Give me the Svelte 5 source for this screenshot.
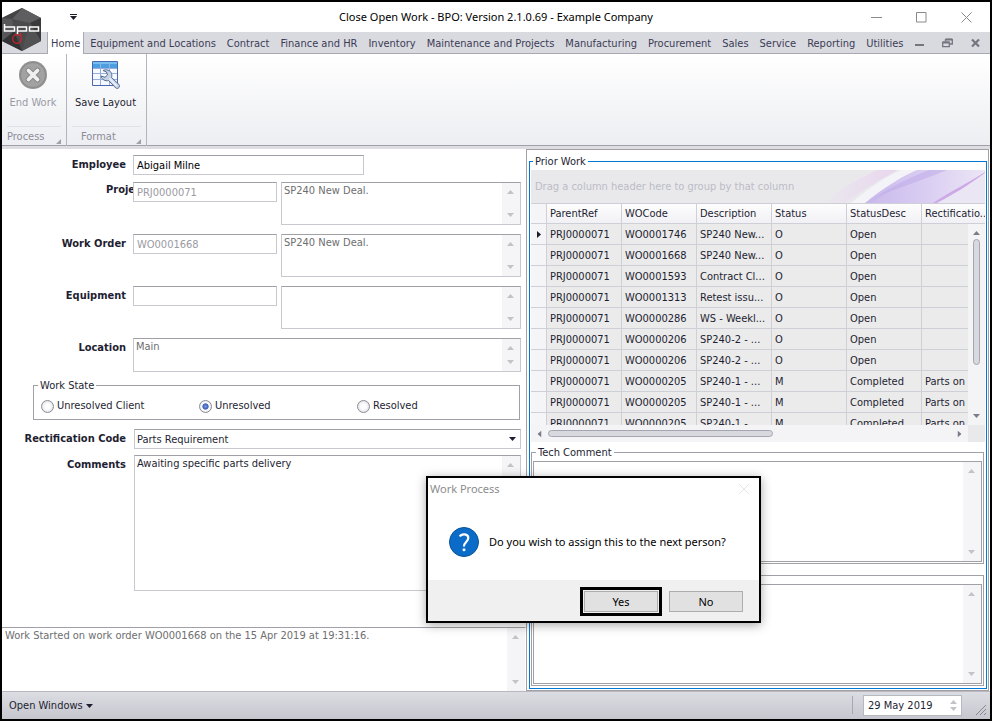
<script>
let state = "unresolved";
let code = "Parts Requirement";

const tabs = [
    "Equipment and Locations",
    "Contract",
    "Finance and HR",
    "Inventory",
    "Maintenance and Projects",
    "Manufacturing",
    "Procurement",
    "Sales",
    "Service",
    "Reporting",
    "Utilities",
];

const links = [
    { id : "project", label : "Project", ref : "PRJ0000071", text : "SP240 New Deal." },
    { id : "order", label : "Work Order", ref : "WO0001668", text : "SP240 New Deal." },
    { id : "equipment", label : "Equipment", ref : "", text : "" },
];

const states = [
    { value : "client", label : "Unresolved Client" },
    { value : "unresolved", label : "Unresolved" },
    { value : "resolved", label : "Resolved" },
];

const columns = [ "ParentRef", "WOCode", "Description", "Status", "StatusDesc", "Rectificatio.." ];

const rows = [
    [ "PRJ0000071", "WO0001746", "SP240 New...", "O", "Open", "" ],
    [ "PRJ0000071", "WO0001668", "SP240 New...", "O", "Open", "" ],
    [ "PRJ0000071", "WO0001593", "Contract Cl...", "O", "Open", "" ],
    [ "PRJ0000071", "WO0001313", "Retest issu...", "O", "Open", "" ],
    [ "PRJ0000071", "WO0000286", "WS - Weekl...", "O", "Open", "" ],
    [ "PRJ0000071", "WO0000206", "SP240-2 - ...", "O", "Open", "" ],
    [ "PRJ0000071", "WO0000206", "SP240-2 - ...", "O", "Open", "" ],
    [ "PRJ0000071", "WO0000205", "SP240-1 - ...", "M", "Completed", "Parts on" ],
    [ "PRJ0000071", "WO0000205", "SP240-1 - ...", "M", "Completed", "Parts on" ],
    [ "PRJ0000071", "WO0000205", "SP240-1 - ...", "M", "Completed", "Parts on" ],
];
</script>

{#snippet arrow(dir)}
    <svg class="arrow {dir}" viewBox="0 0 7 4" width="7" height="4" aria-hidden="true"><path d="M0 4L3.5 0L7 4z" /></svg>
{/snippet}

{#snippet memo(id, text, label)}
    <div class="memo">
        <textarea {id} aria-label={label} readonly value={text}></textarea>
        <div class="strip">
            {@render arrow("up")}
            {@render arrow("down")}
        </div>
    </div>
{/snippet}

<div class="window">
    <header class="titlebar">
        <button class="quick" aria-label="Customise toolbar">
            <svg viewBox="0 0 7 6" width="7" height="6"><path d="M0 0h7v1H0zM0 2h7L3.500 6z" fill="#1e1e28" /></svg>
        </button>
        <h1>Close Open Work - BPO: Version 2.1.0.69 - Example Company</h1>
        <div class="controls">
            <button aria-label="Minimise"><svg viewBox="0 0 11 11" width="11" height="11"><path d="M0 5.5h11" /></svg></button>
            <button aria-label="Maximise"><svg viewBox="0 0 11 11" width="11" height="11"><path d="M.5 .5h9.500v9.500h-9.500z" /></svg></button>
            <button aria-label="Close"><svg viewBox="0 0 11 11" width="11" height="11"><path d="M.5 .5l10 10M10.500 .5l-10 10" /></svg></button>
        </div>
    </header>

    <svg class="logo" viewBox="0 0 40 46" width="40" height="46" aria-hidden="true">
        <path d="M20 1L39 11V34L20 44L0 34V11z" fill="#4a4a4c" />
        <path d="M20 1L39 11L28 16L10 12z" fill="#5e5e60" />
        <path d="M20 1L10 12L0 11z" fill="#444446" />
        <path d="M39 11V34L28 16z" fill="#3a3a3c" />
        <path d="M39 34L20 44L28 16z" fill="#525254" />
        <path d="M0 34L20 44L12 24z" fill="#333335" />
        <path d="M0 11L10 12L12 24L0 34z" fill="#58585a" />
        <g fill="none" stroke="#fff" stroke-width="1.500">
            <path d="M2.500 17V24H12.500V20H2.500" />
            <path d="M15.500 28V20H24.500V24H15.500" />
            <path d="M27.500 20H36.500V24H27.500z" />
        </g>
        <circle cx="15" cy="32" r="4.300" fill="none" stroke="#d3222a" stroke-width="1.200" />
        <path d="M18.500 29V26" stroke="#d3222a" />
    </svg>

    <nav class="tabs">
        <a class="active" href="#home">Home</a>
        {#each tabs as tab}
            <a href="#{tab.toLowerCase().split(' ').join('-')}">{tab}</a>
        {/each}
        <div class="mdi">
            <button aria-label="Minimise document"><svg viewBox="0 0 11 10" width="11" height="10"><path d="M1 6h9v2H1z" fill="#74757f" /></svg></button>
            <button aria-label="Restore document"><svg viewBox="0 0 11 10" width="11" height="10"><g fill="none" stroke="#74757f" stroke-width="1.300"><path d="M3.500 3.500V1.300H10.300V6H7.500" /><path d="M.7 4.200H7.300V8.600H.7z" /><path d="M4 1.600h6M1 4.500h6" stroke-width="2" /></g></svg></button>
            <button aria-label="Close document"><svg viewBox="0 0 11 10" width="11" height="10"><path d="M2 1.500l7 7M9 1.500l-7 7" stroke="#74757f" stroke-width="2.200" /></svg></button>
        </div>
    </nav>

    <div class="ribbon">
        <section class="group process">
            <button class="big" disabled>
                <svg viewBox="0 0 30 30" width="30" height="30">
                    <circle cx="15" cy="15" r="14" fill="#949494" />
                    <circle cx="15" cy="15" r="12.500" fill="#a2a2a2" stroke="#8a8a8a" />
                    <path d="M10.500 10.500l9 9M19.500 10.500l-9 9" stroke="#858585" stroke-width="5.500" stroke-linecap="round" />
                    <path d="M10.500 10.500l9 9M19.500 10.500l-9 9" stroke="#f0f0f0" stroke-width="3.800" stroke-linecap="round" />
                </svg>
                <span>End Work</span>
            </button>
            <footer>Process <svg class="launch" viewBox="0 0 5 5" width="5" height="5"><path d="M5 0V5H0z" /></svg></footer>
        </section>
        <section class="group format">
            <button class="big">
                <svg viewBox="0 0 30 30" width="30" height="30">
                    <path d="M1.500 1.500h25v24h-25z" fill="#f6f9ff" stroke="#4a66b0" />
                    <path d="M2 2h24v6H2z" fill="#4b9fe0" />
                    <path d="M2 2h24v2H2z" fill="#74bdf0" />
                    <path d="M9.500 2v23M18.500 2v23M2 8.500h24M2 13.500h24M2 19.500h24" stroke="#98aedb" />
                    <path d="M12 10.500C15 9 19.500 10 20.500 13.500C21 15 20.800 16.500 20.500 17.500L28 24.500C29.700 26.500 27 29.700 24.800 28L17.500 20.500C14.500 21.500 10.500 19.500 10 16L14 17.300L16.500 15L15.500 12z" fill="#c5d3e6" stroke="#566a8c" />
                    <path d="M18.500 18.500l7.500 7.500" stroke="#eef4fb" stroke-width="1.500" />
                </svg>
                <span>Save Layout</span>
            </button>
            <footer>Format <svg class="launch" viewBox="0 0 5 5" width="5" height="5"><path d="M5 0V5H0z" /></svg></footer>
        </section>
    </div>

    <main>
        <div class="left">
            <form class="form">
                <div class="row">
                    <label for="employee">Employee</label>
                    <input id="employee" class="wide" type="text" value="Abigail Milne" />
                </div>

                {#each links as { id, label, ref, text }}
                    <div class="row tall">
                        <label class:cut={id === "project"} for={id}>{label}</label>
                        <input {id} type="text" value={ref} disabled />
                        {@render memo(`${id}-text`, text, `${label} description`)}
                    </div>
                {/each}

                <div class="row location">
                    <label for="location">Location</label>
                    {@render memo("location", "Main", null)}
                </div>

                <fieldset class="states">
                    <legend>Work State</legend>
                    {#each states as { value, label }}
                        <label><input type="radio" name="state" {value} bind:group={state} />{label}</label>
                    {/each}
                </fieldset>

                <div class="row code">
                    <label for="code">Rectification Code</label>
                    <div class="select">
                        <select id="code" bind:value={code}>
                            <option>Parts Requirement</option>
                        </select>
                        {@render arrow("down")}
                    </div>
                </div>

                <div class="row comments">
                    <label for="comments">Comments</label>
                    {@render memo("comments", "Awaiting specific parts delivery", null)}
                </div>
            </form>

            <div class="log">
                {@render memo("log", "Work Started on work order WO0001668 on the 15 Apr 2019 at 19:31:16.", "Work log")}
            </div>
        </div>

        <div class="right">
            <fieldset class="prior">
                <legend>Prior Work</legend>
                <div class="grid">
                    <div class="drag">
                        <svg viewBox="0 0 160 33" width="160" height="33" aria-hidden="true">
                            <defs>
                                <linearGradient id="wash"><stop offset="0" stop-color="#e9e8ee" /><stop offset="1" stop-color="#e9d6ee" /></linearGradient>
                                <linearGradient id="band"><stop offset="0" stop-color="#c9b9ec" /><stop offset=".5" stop-color="#d9cdf2" /><stop offset="1" stop-color="#ece6f5" /></linearGradient>
                            </defs>
                            <path d="M0 33C20 14 40 6 52 0H72C55 10 40 18 20 33z" fill="url(#wash)" />
                            <path d="M26 33C44 18 62 6 76 0H98C76 9 56 20 40 33z" fill="#f4f3f8" />
                            <path d="M40 33C58 18 78 6 92 0H160C155 16 146 27 134 33z" fill="url(#band)" />
                            <path d="M44 33C62 20 88 14 122 0H104C80 10 58 20 44 33z" fill="#bba8e8" opacity=".5" />
                            <path d="M108 33C124 22 145 12 160 2V3C144 15 126 26 112 33z" fill="#cdaae6" />
                            <path d="M112 33C126 26 144 15 160 3V33z" fill="#eae6f3" />
                        </svg>
                        <span>Drag a column header here to group by that column</span>
                    </div>
                    <div class="viewport">
                        <table>
                            <thead>
                                <tr>
                                    <th class="mark"></th>
                                    {#each columns as column}
                                        <th>{column}</th>
                                    {/each}
                                </tr>
                            </thead>
                            <tbody>
                                {#each rows as row, i}
                                    <tr>
                                        <td class="mark">
                                            {#if i === 0}<svg viewBox="0 0 4 7" width="4" height="7"><path d="M0 0L4 3.500L0 7z" fill="#1c1c2c" /></svg>{/if}
                                        </td>
                                        {#each row as cell}
                                            <td>{cell}</td>
                                        {/each}
                                    </tr>
                                {/each}
                            </tbody>
                        </table>
                        <div class="vscroll">
                            {@render arrow("up")}
                            <div class="thumb"></div>
                            {@render arrow("down")}
                        </div>
                    </div>
                    <div class="hscroll">
                        {@render arrow("back")}
                        <div class="thumb"></div>
                        {@render arrow("next")}
                        <div class="corner"></div>
                    </div>
                </div>

                <fieldset class="note tech">
                    <legend>Tech Comment</legend>
                    {@render memo("tech", "", "Tech comment")}
                </fieldset>
                <fieldset class="note extra">
                    {@render memo("extra", "", "Further comment")}
                </fieldset>
            </fieldset>
        </div>
    </main>

    <footer class="status">
        <button class="open">Open Windows {@render arrow("down")}</button>
        <div class="date">
            <input type="text" aria-label="Date" value="29 May 2019" />
            <div class="spin">
                {@render arrow("up")}
                {@render arrow("down")}
            </div>
        </div>
        <svg class="grip" viewBox="0 0 12 12" width="12" height="12" aria-hidden="true"><path d="M1 11L11 1M5 11L11 5M9 11L11 9" stroke="#85868f" /></svg>
    </footer>

    <div class="dialog" role="dialog" aria-labelledby="dialog-title">
        <header>
            <h2 id="dialog-title">Work Process</h2>
            <button aria-label="Close dialog"><svg viewBox="0 0 10 10" width="10" height="10"><path d="M0 0l10 10M10 0L0 10" stroke="#e4e4e4" /></svg></button>
        </header>
        <div class="question">
            <svg viewBox="0 0 30 30" width="30" height="30" aria-hidden="true">
                <circle cx="15" cy="15" r="14.500" fill="#0a6cc8" stroke="#0b5294" />
                <path d="M10.800 9.500C12.500 6.300 19.300 6.500 19.300 11C19.300 14.700 15 14.800 15 19.500" fill="none" stroke="#fff" stroke-width="2.200" />
                <circle cx="15" cy="22.800" r="1.500" fill="#fff" />
            </svg>
            <p>Do you wish to assign this to the next person?</p>
        </div>
        <footer>
            <button class="yes">Yes</button>
            <button>No</button>
        </footer>
    </div>
</div>

<style>
    :global(body) {
        background: #FFF;
    }

    .window,
    .window :global(*) {
        box-sizing: border-box;
    }

    .window {
        --line: #A0A0A6;
        --soft: #C8C8CE;
        --ink: #1E1E32;

        display: flex;
        flex-direction: column;
        position: relative;

        min-height: 100vh;
        border: 2px solid #000;
        overflow: hidden;

        background: #FFF;
        color: var(--ink);
        font: 11px/14px "DejaVu Sans Condensed", Tahoma, sans-serif;
    }

    button,
    input,
    select,
    textarea {
        margin: 0;
        padding: 0;
        border: 0;
        background: none;
        color: inherit;
        font: inherit;
    }

    button {
        display: flex;
        justify-content: center;
        align-items: center;
    }

    svg {
        display: block;
        flex: none;
    }

    .arrow {
        fill: #C2C2C8;
    }

    .arrow.down {
        transform: rotate(180deg);
    }

    .arrow.back {
        transform: rotate(-90deg);
    }

    .arrow.next {
        transform: rotate(90deg);
    }

    .titlebar {
        display: grid;
        grid-template-columns: 150px 1fr 150px;
        align-items: center;

        height: 30px;
    }

    .quick {
        width: 16px;
        height: 16px;
        margin-left: 63px;
    }

    h1,
    h2 {
        margin: 0;

        font: 11px/16px "Noto Sans", "Segoe UI", sans-serif;
        text-align: center;
    }

    h1 {
        color: #000;
    }

    .controls {
        display: flex;
        justify-content: flex-end;
        gap: 34px;

        padding-right: 18px;
    }

    .controls path {
        fill: none;
        stroke: #8A8A8A;
    }

    .logo {
        position: absolute;
        top: 5px;
        left: 0;
        z-index: 1;
    }

    .tabs {
        display: flex;
        align-items: center;
        gap: 11px;

        height: 22px;
        padding-left: 45px;
        border-bottom: 1px solid #A9A9B3;

        background: #D9DAE0;
    }

    .tabs a {
        padding-top: 2px;

        color: #3C3C55;
        text-decoration: none;
        white-space: nowrap;
    }

    .tabs .active {
        height: 22px;
        padding: 5px 3px 0;
        border: solid #A9A9B3;
        border-width: 0 1px;
        margin-right: -5px;

        background: #FFF;
    }

    .mdi {
        display: flex;
        gap: 17px;

        margin-left: auto;
        padding-right: 9px;
    }

    .ribbon {
        display: flex;

        height: 95px;
        border-bottom: 3px solid #DDDDE2;

        background: linear-gradient(#FFF, #EDEEF2);
        box-shadow: inset 0 -1px #A0A0AA;
    }

    .group {
        display: flex;
        flex-direction: column;
        justify-content: space-between;

        border-right: 1px solid #B4B4BE;
    }

    .process {
        width: 65px;
    }

    .format {
        width: 80px;
    }

    .big {
        flex-direction: column;
        gap: 6px;

        padding: 6px 2px 0 0;

        white-space: nowrap;
    }

    .big:disabled {
        color: #9A9AA6;
    }

    .group footer {
        display: flex;
        justify-content: space-between;
        align-items: flex-end;

        margin: 0 5px 1px;
        padding: 3px 0 1px;
        border-top: 1px solid #E0E0E6;

        color: #8C8C9A;
    }

    .format footer {
        padding-left: 9px;
    }

    .launch {
        fill: #A0A0AA;
    }

    main {
        display: grid;
        grid-template-columns: minmax(0, 524fr) minmax(0, 464fr);
        flex: 1;
    }

    .left {
        display: flex;
        flex-direction: column;
    }

    .form {
        display: flex;
        flex-direction: column;
        flex: 1;

        padding: 6px 5px 0 0;
    }

    .row {
        display: grid;
        grid-template-columns: 131px minmax(0, 1fr);
        align-items: start;
    }

    .row > label {
        padding: 3px 7px 0 0;

        font-weight: bold;
        text-align: right;
        white-space: nowrap;
    }

    .row .cut {
        padding: 1px 0 0 104px;
        overflow: hidden;
    }

    .row > input {
        height: 20px;
        padding: 0 3px;
        border: 1px solid var(--soft);
        border-color: var(--line) var(--soft) var(--soft) var(--soft);

        color: #000;
    }

    .row > input:disabled {
        color: #9A9AA2;
    }

    .row > .wide {
        width: 231px;
        max-width: 100%;
    }

    .tall {
        grid-template-columns: 131px minmax(0, 144fr) minmax(0, 244fr);

        height: 43px;
        margin-top: 9px;
    }

    .tall > :global(.memo) {
        height: 43px;
        margin-left: 4px;
    }

    .row:first-child + .tall {
        margin-top: 7px;
    }

    .memo {
        display: flex;

        border: 1px solid var(--soft);
        border-top-color: var(--line);
        overflow: hidden;

        color: #6E6E70;
    }

    .memo textarea {
        flex: 1;
        min-width: 0;
        padding: 1px 2px 0;
        outline: 0;
        resize: none;
    }

    .strip {
        display: flex;
        flex-direction: column;
        justify-content: space-between;
        align-items: center;

        width: 18px;
        padding: 7px 2px 7px 0;

        background: #F5F5F7;
    }

    .location {
        margin-top: 9px;
    }

    .location .memo {
        height: 34px;
    }

    fieldset {
        min-width: 0;
        margin: 0;
        padding: 0;
        border: 1px solid var(--line);
    }

    legend {
        padding: 1px 2px 0;
    }

    .states {
        display: grid;
        grid-template-columns: 158px 158px 1fr;

        height: 42px;
        margin: 6px 1px 0 31px;
    }

    .states legend {
        margin-left: 4px;
    }

    .states label {
        display: flex;
        align-items: center;
        gap: 3px;

        height: 26px;
        padding-left: 7px;
    }

    .states input {
        appearance: none;

        width: 13px;
        height: 13px;
        border: 1px solid #8C8C96;
        border-radius: 50%;

        background: radial-gradient(#FFF 30%, #D4D5DC);
    }

    .states input:checked {
        background: radial-gradient(circle, #7F9BE6 0, #3C5CB8 35%, #FFF 45%, #D0D4E0);
    }

    .code {
        margin-top: 9px;
    }

    .select {
        display: flex;
        align-items: center;
        position: relative;

        height: 20px;
        margin-left: 1px;
        border: 1px solid var(--soft);
        border-top-color: var(--line);
    }

    .select select {
        appearance: none;

        width: 100%;
        padding: 1px 2px 0;
    }

    .select .arrow {
        position: absolute;
        right: 4px;

        fill: var(--ink);
        pointer-events: none;
    }

    .comments {
        flex: 1;
        align-items: stretch;

        margin: 6px 0 36px;
    }

    .comments .memo {
        margin-left: 1px;

        color: var(--ink);
    }

    .log .memo {
        height: 64px;
        padding-left: 1px;
        border-width: 1px 1px 0 0;
        border-right-color: transparent;
    }

    .right {
        display: flex;

        margin-right: 1px;
        border: 1px solid var(--line);
        padding: 4px 1px 1px 2px;
    }

    .prior {
        display: flex;
        flex-direction: column;
        flex: 1;

        border-color: #0078D7;
    }

    .prior > legend {
        margin-left: 3px;
    }

    .grid {
        margin: 1px 1px 0;
    }

    .drag {
        display: flex;
        align-items: center;
        position: relative;

        height: 33px;
        padding-left: 4px;
        overflow: hidden;

        background: #E9E9EC;
        color: #BCBCC6;
    }

    .drag svg {
        position: absolute;
        right: 0;
    }

    .drag span {
        position: relative;
    }

    .viewport {
        position: relative;

        height: 222px;
        overflow: hidden;
    }

    table {
        table-layout: fixed;

        width: 100%;
        border-collapse: separate;
        border-spacing: 0;
    }

    th,
    td {
        height: 21px;
        padding: 1px 0 0 3px;
        border: solid #CFCFD8;
        border-width: 0 0 1px 1px;

        font-weight: normal;
        text-align: left;
        white-space: nowrap;
    }

    th:not(.mark):not(:last-child) {
        width: 75px;
    }

    th {
        padding-top: 0;
        border-top: 1px solid #CFCFD8;

        background: linear-gradient(#FDFDFE, #F1F1F5);
    }

    td {
        background: #EBEBEB;
    }

    .mark {
        width: 15px;
        padding: 0 0 0 6px;
        border-left: 0;

        background: #F5F5F8;
    }

    .vscroll {
        display: flex;
        flex-direction: column;
        align-items: center;
        gap: 4px;
        position: absolute;
        top: 21px;
        right: 0;
        bottom: 0;

        width: 17px;
        padding: 7px 0;

        background: #F4F4F6;
    }

    .vscroll .arrow,
    .hscroll .arrow {
        fill: #7C7C88;
    }

    .thumb {
        border: 1px solid #A6A6B2;
        border-radius: 4px;

        background: #D8D8DF;
    }

    .vscroll .thumb {
        width: 7px;
        height: 126px;
        margin-bottom: auto;
    }

    .hscroll {
        display: flex;
        align-items: center;
        gap: 5px;

        height: 17px;
        padding-left: 5px;

        background: #F4F4F6;
    }

    .hscroll .thumb {
        width: 225px;
        height: 7px;
        margin-right: auto;
    }

    .corner {
        width: 17px;
        height: 17px;

        background: #E9E9EC;
    }

    .note legend {
        margin-left: 4px;
    }

    .note .memo {
        margin: 1px;
        border-color: var(--line);
    }

    .tech {
        margin: 3px 2px 0 1px;
    }

    .tech .memo {
        height: 101px;
    }

    .extra {
        display: flex;
        flex: 1;

        margin: 11px 2px 2px 1px;
        padding-top: 7px;
    }

    .extra .memo {
        flex: 1;
    }

    .status {
        display: flex;
        align-items: center;

        height: 28px;
        border-top: 1px solid #B8B8C0;

        background: linear-gradient(#DCDDE3, #C6C7CE);
    }

    .open {
        gap: 3px;

        padding: 1px 0 0 7px;
    }

    .open .arrow {
        fill: var(--ink);
    }

    .date {
        display: flex;
        position: relative;

        width: 99px;
        height: 21px;
        margin-left: auto;
        border: 1px solid #B8B8C0;

        background: #FFF;
    }

    .date::before {
        content: "";
        position: absolute;
        left: -12px;

        width: 1px;
        height: 18px;

        background: #A8A8B2;
    }

    .date input {
        flex: 1;
        min-width: 0;
        padding: 1px 0 0 4px;
    }

    .spin {
        display: flex;
        flex-direction: column;
        justify-content: space-between;

        padding: 4px;
    }

    .grip {
        align-self: flex-end;

        margin: 0 3px 3px 13px;
    }

    .dialog {
        display: flex;
        flex-direction: column;
        position: absolute;
        top: 474px;
        left: 424px;
        z-index: 2;

        width: 335px;
        height: 147px;
        border: 2px solid #000;

        background: #FFF;
        box-shadow: 0 2px 10px rgba(0, 0, 0, 0.35);
        color: #000;
        font: 11px/16px "Noto Sans", "Segoe UI", sans-serif;
    }

    .dialog header {
        display: flex;
        justify-content: space-between;
        align-items: center;

        height: 22px;
        padding: 0 10px 0 2px;

        color: #8C8C8C;
    }

    .question {
        display: flex;
        align-items: center;
        flex: 1;
        gap: 10px;

        padding: 3px 0 0 21px;
    }

    .question p {
        margin: 0;
    }

    .dialog > footer {
        display: flex;
        justify-content: flex-end;
        align-items: center;
        gap: 11px;

        height: 41px;
        padding: 2px 16px 0 0;

        background: #F0F0F0;
    }

    .dialog > footer button {
        width: 74px;
        height: 21px;
        border: 1px solid #ADADAD;

        background: #E1E1E1;
    }

    .dialog > footer .yes {
        outline: 3px solid #000;
        outline-offset: 1px;
    }
</style>
